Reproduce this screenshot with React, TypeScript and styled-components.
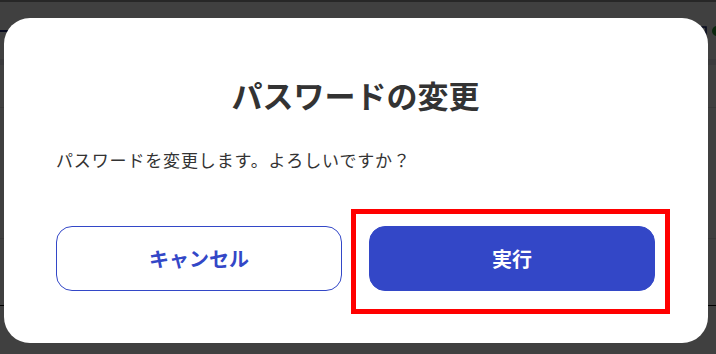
import styled, { createGlobalStyle } from "styled-components";

const GlobalStyle = createGlobalStyle`
    html, body {
        margin: 0;
        padding: 0;
        background: #ffffff;
    }
    body {
        font-family: "Noto Sans CJK JP", "Noto Sans", sans-serif;
        color: #333333;
    }
`;

const ACCENT = "#3347c7";

export default function App() {
    return (
        <>
            <GlobalStyle />
            <Page>
                <TopStrip />
                <PageHeader>
                    <Logo />
                    <HeaderIcons>
                        <BellIcon viewBox="0 0 12 12">
                            <path d="M2 2h8v7H2z" fill="none" stroke="#1c2b7a" strokeWidth="1.6" />
                        </BellIcon>
                        <StatusDot />
                    </HeaderIcons>
                </PageHeader>
                <Band />
                <PageRow $height={42} />
                <PageRow $height={130} />
                <PageRow $height={66} $dark />
            </Page>

            <Overlay>
                <Dialog>
                    <Title>パスワードの変更</Title>
                    <Message>パスワードを変更します。よろしいですか？</Message>
                    <Actions>
                        <ActionButton $variant="outline">キャンセル</ActionButton>
                        <Highlight>
                            <ActionButton $variant="primary">実行</ActionButton>
                            <Marker />
                        </Highlight>
                    </Actions>
                </Dialog>
            </Overlay>
        </>
    );
}

const Page = styled.div`
    width: 716px;
    height: 354px;
    display: flex;
    flex-direction: column;
    overflow: hidden;
`;

const TopStrip = styled.div`
    height: 2px;
    background: #9a9a9a;
`;

const PageHeader = styled.div`
    height: 57px;
    display: flex;
    align-items: center;
    justify-content: space-between;
`;

const Logo = styled.div`
    width: 40px;
    height: 2px;
    margin-top: 1px;
    background: #1c2b7a;
`;

const HeaderIcons = styled.div`
    display: flex;
    align-items: center;
    gap: 4px;
    margin-right: -6px;
`;

const BellIcon = styled.svg`
    width: 12px;
    height: 12px;
`;

const StatusDot = styled.span`
    width: 10px;
    height: 10px;
    border-radius: 50%;
    background: #2e9a3a;
`;

const Band = styled.div`
    height: 6px;
    background: #e6e8f0;
`;

const PageRow = styled.div<{ $height: number; $dark?: boolean }>`
    height: ${({ $height }) => $height}px;
    flex-shrink: 0;
    border-bottom: 1px solid ${({ $dark }) => ($dark ? "#000000" : "#e2e2e2")};
`;

const Overlay = styled.div`
    position: fixed;
    inset: 0;
    display: flex;
    padding: 18px 8px 11px 4px;
    background: rgba(0, 0, 0, 0.75);
`;

const Dialog = styled.div`
    flex: 1;
    display: flex;
    flex-direction: column;
    padding: 56px 53px 52px 52px;
    background: #ffffff;
    border-radius: 26px;
`;

const Title = styled.h2`
    margin: 0;
    font-size: 31px;
    line-height: 42px;
    font-weight: 700;
    text-align: center;
    color: #333333;
`;

const Message = styled.p`
    margin: 32px 0 0;
    font-size: 17px;
    line-height: 24px;
    letter-spacing: 0.05em;
    color: #333333;
`;

const Actions = styled.div`
    display: grid;
    grid-template-columns: 1fr 1fr;
    gap: 27px;
    margin-top: 54px;
`;

const Highlight = styled.div`
    position: relative;
    display: flex;
`;

const Marker = styled.span`
    position: absolute;
    left: -18px;
    right: -15px;
    top: -17px;
    bottom: -23px;
    border: 5px solid #ff0000;
    pointer-events: none;
`;

const ActionButton = styled.button<{ $variant: "outline" | "primary" }>`
    flex: 1;
    width: 100%;
    height: 65px;
    border-radius: 16px;
    border: 1px solid ${ACCENT};
    background: ${({ $variant }) => ($variant === "primary" ? ACCENT : "#ffffff")};
    color: ${({ $variant }) => ($variant === "primary" ? "#ffffff" : ACCENT)};
    font-family: "Noto Sans CJK JP", "Noto Sans", sans-serif;
    font-size: 20px;
    font-weight: 700;
    cursor: pointer;
`;
